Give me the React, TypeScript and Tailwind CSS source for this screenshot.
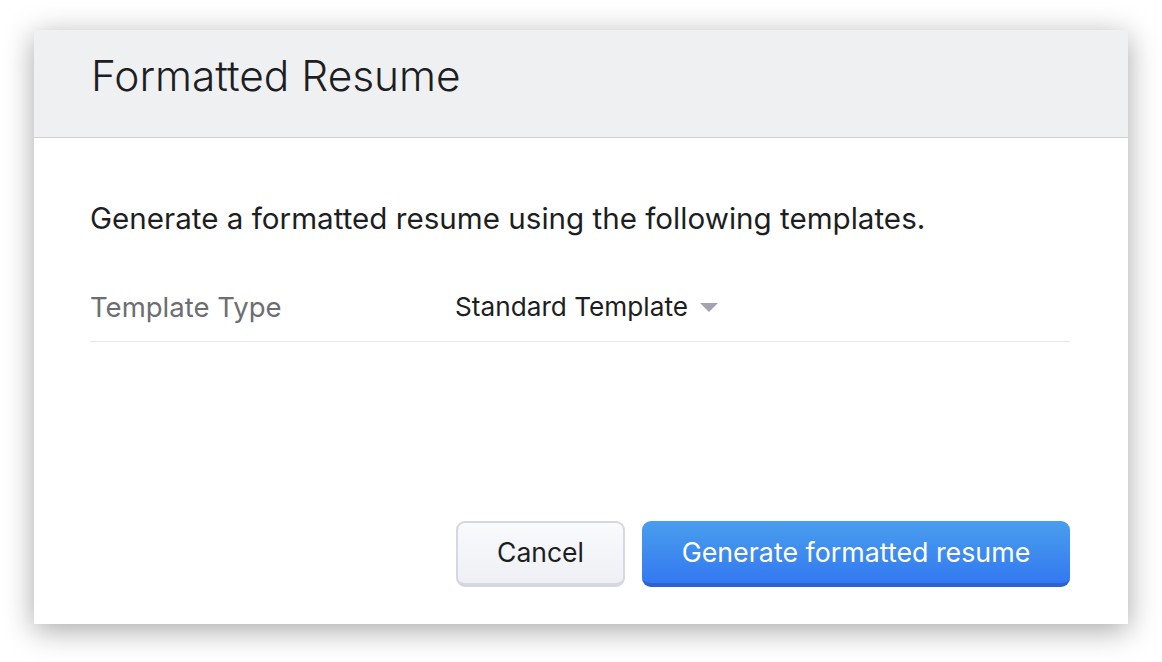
import React from "react";

const font = { fontFamily: "Inter, 'Noto Sans', sans-serif" };

export default function App() {
  return (
    <div className="w-[1162px] h-[662px] bg-white pl-[34px] pt-[30px]" style={font}>
      <div className="w-[1094px] h-[594px] bg-white flex flex-col shadow-[0_6px_28px_rgba(0,0,0,0.35)]">
        <div className="h-[108px] bg-[#eff0f2] border-b border-[#cfd0d3] pl-[57px] pt-[21px]">
          <h1 className="text-[42.4px] leading-[50px] font-light text-[#1d1e22]">
            Formatted Resume
          </h1>
        </div>
        <div className="flex-1 flex flex-col pl-[56px] pr-[58px]">
          <p className="mt-[62px] text-[29.6px] leading-[36px] text-[#1d1e22]">
            Generate a formatted resume using the following templates.
          </p>
          <div className="mt-[53px] flex items-center pb-[16px] border-b border-[#e6e7e9]">
            <span className="w-[365px] text-[27.5px] leading-[36px] text-[#6d6e72]">Template Type</span>
            <button className="flex items-center gap-[12px] text-[26.2px] leading-[36px] text-[#1d1e22]">
              Standard Template
              <svg width="18" height="10" viewBox="0 0 18 10" className="mt-[2px]">
                <path d="M0 0 L18 0 L9 9 Z" fill="#a2a4ad" />
              </svg>
            </button>
          </div>
          <div className="mt-auto mb-[37px] flex justify-end gap-[17px]">
            <button className="w-[169px] h-[66px] rounded-[9px] border-2 border-b-[4px] border-[#d5d8e0] bg-gradient-to-b from-[#f9fafc] to-[#eef0f5] text-[26.5px] text-[#1d1e22]">
              Cancel
            </button>
            <button className="w-[428px] h-[66px] rounded-[9px] border-b-[4px] border-[#2c63cf] bg-gradient-to-b from-[#4a9eec] to-[#3478f1] text-[26.8px] text-white">
              Generate formatted resume
            </button>
          </div>
        </div>
      </div>
    </div>
  );
}
